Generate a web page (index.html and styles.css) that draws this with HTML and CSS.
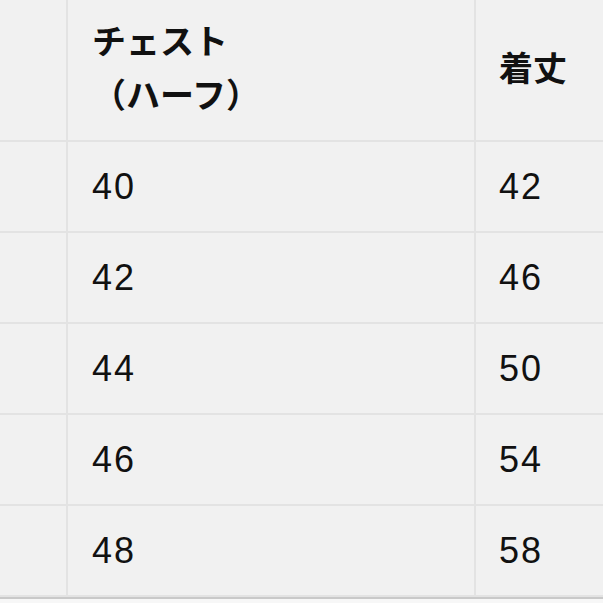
FILE: index.html
```html
<!DOCTYPE html>
<html lang="ja">
<head>
<meta charset="utf-8">
<link rel="stylesheet" href="styles.css">
</head>
<body>
<div class="sheet">
  <div class="grid">
    <div class="cell head side"></div>
    <div class="cell head">チェスト<br>（ハーフ）</div>
    <div class="cell head last">着丈</div>

    <div class="cell side"></div><div class="cell num">40</div><div class="cell num last">42</div>
    <div class="cell side"></div><div class="cell num">42</div><div class="cell num last">46</div>
    <div class="cell side"></div><div class="cell num">44</div><div class="cell num last">50</div>
    <div class="cell side"></div><div class="cell num">46</div><div class="cell num last">54</div>
    <div class="cell side"></div><div class="cell num">48</div><div class="cell num last">58</div>
  </div>
  <div class="foot"></div>
</div>
</body>
</html>
```

FILE: styles.css
```css
html, body {
  margin: 0;
  padding: 0;
  background: #f1f1f1;
}

.sheet {
  width: 603px;
  height: 603px;
  overflow: hidden;
  display: flex;
  flex-direction: column;
}

.grid {
  display: grid;
  grid-template-columns: 66px 406px 1fr;
  grid-template-rows: 140px repeat(5, 89px);
  column-gap: 2px;
  row-gap: 2px;
  background: #e3e3e3;
  border-bottom: 2px solid #e3e3e3;
}

.cell {
  background: #f1f1f1;
  display: flex;
  align-items: center;
  padding-left: 25px;
  color: #111;
}

.side {
  padding-left: 0;
}

.head {
  font-family: "Noto Sans CJK JP", "Liberation Sans", sans-serif;
  font-weight: 700;
  font-size: 34px;
  line-height: 54px;
  padding-left: 24px;
  padding-bottom: 6px;
}

.num {
  font-family: "Liberation Sans", "Noto Sans CJK JP", sans-serif;
  font-weight: 400;
  font-size: 36px;
  letter-spacing: 2px;
  padding-left: 24px;
}

.last {
  padding-left: 23px;
}

.foot {
  border-top: 2px solid #c9c9c9;
  flex: 1;
  background: #f7f7f7;
}
```
